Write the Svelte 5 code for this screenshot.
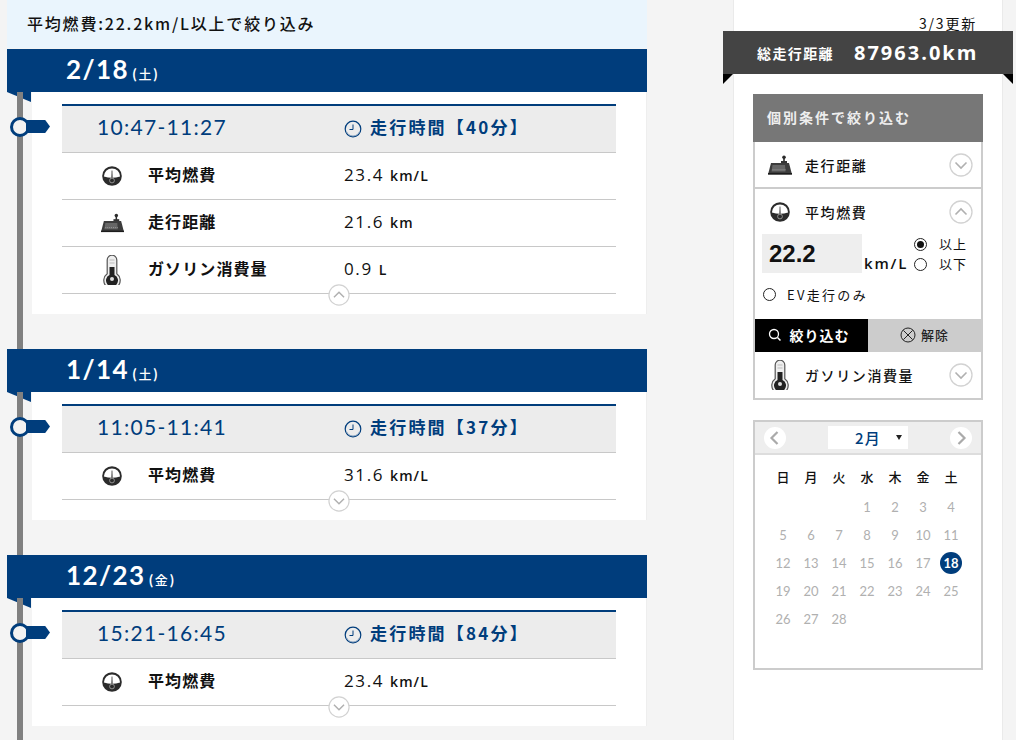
<script>
	const days = [
		{
			date: '2/18',
			wd: '土',
			time: '10:47-11:27',
			mins: 40,
			open: true,
			rows: [
				{ icon: 'gauge', label: '平均燃費', value: '23.4', unit: 'km/L' },
				{ icon: 'tray', label: '走行距離', value: '21.6', unit: 'km' },
				{ icon: 'thermo', label: 'ガソリン消費量', value: '0.9', unit: 'L' }
			]
		},
		{
			date: '1/14',
			wd: '土',
			time: '11:05-11:41',
			mins: 37,
			open: false,
			rows: [{ icon: 'gauge', label: '平均燃費', value: '31.6', unit: 'km/L' }]
		},
		{
			date: '12/23',
			wd: '金',
			time: '15:21-16:45',
			mins: 84,
			open: false,
			rows: [{ icon: 'gauge', label: '平均燃費', value: '23.4', unit: 'km/L' }]
		}
	];

	const weekdays = ['日', '月', '火', '水', '木', '金', '土'];
	// Feb starts on a Wednesday
	const cells = [...Array(3).fill(null), ...Array.from({ length: 28 }, (_, i) => i + 1)];
</script>

{#snippet icon(name, w, h)}
	{#if name === 'gauge'}
		<svg width={w} height={h} viewBox="0 0 20 20">
			<circle cx="10" cy="10" r="9.800" fill="#2b2b2b" />
			<path d="M1.900 10.500a8.100 8.100 0 0 1 16.200 0Q10 13 1.900 10.500z" fill="#fff" />
			<path d="M9.600 4.500h.8l.4 8h-1.600z" fill="#555" />
			<circle cx="10" cy="14.500" r="2.400" fill="#2b2b2b" stroke="#aaa" stroke-width=".8" />
		</svg>
	{:else if name === 'tray'}
		<svg width={w} height={h} viewBox="0 0 24 20">
			<path d="M15.200 2h1.600v6h-1.600z" fill="#2b2b2b" />
			<circle cx="16" cy="2.200" r="1.800" fill="#2b2b2b" />
			<path d="M13 6h6v2h-6z" fill="#333" />
			<path d="M3 8H21l3 11.500H0z" fill="#3c3c3c" />
			<path d="M4.500 10h12.500l.5 6.500H3.500z" fill="#666" />
			<path d="M4.500 14.800h13" stroke="#aaa" stroke-width=".8" stroke-dasharray="1 1" />
			<path d="M0 18h24v1.500H0z" fill="#1c1c1c" />
		</svg>
	{:else if name === 'thermo'}
		<svg width={w} height={h} viewBox="0 0 18 30">
			<path d="M4.200 18.800V5a4.800 4.800 0 0 1 9.600 0v13.800a8.200 8.200 0 1 1-9.600 0z" fill="#eee" stroke="#555" stroke-width="1.200" />
			<path d="M6.500 12h5v8a6 6 0 1 1-5 0z" fill="#222" />
			<circle cx="9" cy="24" r="2" fill="#ddd" />
			<path d="M6.500 5h5M6.500 8h5" stroke="#bbb" stroke-width="1" />
		</svg>
	{/if}
{/snippet}

{#snippet chevron(up, size)}
	<svg class="chev" width={size} height={size} viewBox="0 0 24 24">
		<circle cx="12" cy="12" r="11" fill="#fff" stroke="#d2d2d2" stroke-width="1.300" />
		<path d={up ? 'M6.500 14.500 12 9l5.500 5.500' : 'M6.500 9.500 12 15l5.500-5.500'} fill="none" stroke="#b0b0b0" stroke-width="1.600" />
	</svg>
{/snippet}

<div class="page">
	<main class="timeline">
		<div class="notice">平均燃費:22.2km/L以上で絞り込み</div>
		{#each days as day}
			<section class="day">
				<h2 class="date">{day.date}<small>(<span>{day.wd}</span>)</small></h2>
				<div class="card">
					<span class="pin"></span>
					<div class="time-row">
						<span class="time">{day.time}</span>
						<span class="duration">
							<svg width="18" height="18" viewBox="0 0 18 18">
								<circle cx="9" cy="9" r="7.800" fill="none" stroke="#003d7c" stroke-width="1.200" />
								<path d="M9 4.500V9.500H5.500" fill="none" stroke="#003d7c" stroke-width="1" />
								<path d="M2.500 11.500a7 7 0 0 0 13 0" fill="none" stroke="#8fa8c4" stroke-width="1" />
							</svg>
							<span class="duration-text">走行時間【{day.mins}分】</span>
						</span>
					</div>
					{#each day.rows as row}
						<div class="row">
							<span class="row-icon">
								{@render icon(row.icon, row.icon === 'tray' ? 23 : row.icon === 'thermo' ? 18 : 20, row.icon === 'thermo' ? 30 : 20)}
							</span>
							<span class="row-label">{row.label}</span>
							<span class="row-value">{row.value}<small>{row.unit}</small></span>
						</div>
					{/each}
					<div class="toggle">{@render chevron(day.open, 22)}</div>
				</div>
			</section>
		{/each}
	</main>

	<aside class="side">
		<p class="updated">3/3更新</p>
		<div class="total">
			<span class="total-label">総走行距離</span>
			<span class="total-value">87963.0km</span>
		</div>

		<div class="filter">
			<h3>個別条件で絞り込む</h3>
			<div class="acc">
				<div class="acc-head">
					<span class="acc-icon">{@render icon('tray', 24, 20)}</span>
					<span class="acc-label">走行距離</span>
					{@render chevron(false, 24)}
				</div>
				<div class="acc-open">
					<div class="acc-head">
						<span class="acc-icon">{@render icon('gauge', 20, 20)}</span>
						<span class="acc-label">平均燃費</span>
						{@render chevron(true, 24)}
					</div>
					<div class="fuel">
						<div class="fuel-input">22.2</div>
						<span class="fuel-unit">km/L</span>
						<div class="fuel-radios">
							<label><i class="radio on"></i>以上</label>
							<label><i class="radio"></i>以下</label>
						</div>
					</div>
					<label class="ev"><i class="radio"></i>EV走行のみ</label>
					<div class="actions">
						<button class="apply">
							<svg width="14" height="14" viewBox="0 0 14 14">
								<circle cx="6" cy="6" r="4.500" fill="none" stroke="#fff" stroke-width="1.300" />
								<path d="M9.500 9.500l3 3" stroke="#fff" stroke-width="1.500" />
							</svg>
							絞り込む
						</button>
						<button class="clear">
							<svg width="16" height="16" viewBox="0 0 16 16">
								<circle cx="8" cy="8" r="7" fill="none" stroke="#222" stroke-width="1" />
								<path d="M3.500 3.500l9 9m0-9l-9 9" stroke="#222" stroke-width="1" />
							</svg>
							解除
						</button>
					</div>
				</div>
				<div class="acc-head last">
					<span class="acc-icon">{@render icon('thermo', 18, 30)}</span>
					<span class="acc-label">ガソリン消費量</span>
					{@render chevron(false, 24)}
				</div>
			</div>
		</div>

		<div class="calendar">
			<div class="cal-head">
				<span class="nav">
					<svg width="22" height="22" viewBox="0 0 22 22"><path d="M13.500 5 7.500 11l6 6" fill="none" stroke="#aaa" stroke-width="2.200" /></svg>
				</span>
				<div class="month">2月<i></i></div>
				<span class="nav">
					<svg width="22" height="22" viewBox="0 0 22 22"><path d="M8.500 5l6 6-6 6" fill="none" stroke="#aaa" stroke-width="2.200" /></svg>
				</span>
			</div>
			<div class="cal-grid">
				{#each weekdays as w}
					<span class="wd">{w}</span>
				{/each}
				{#each cells as d}
					<span class="cell" class:active={d === 18}>{d ?? ''}</span>
				{/each}
			</div>
		</div>
	</aside>
</div>

<style>
	:global(body) {
		background: #f4f4f4;
		overflow: hidden;
	}

	.page {
		display: flex;
		align-items: flex-start;
		height: 740px;
		overflow: hidden;
		font-family: "Noto Sans CJK JP", "Noto Sans", sans-serif;
		color: #111;
	}

	.timeline {
		position: relative;
		width: 640px;
		margin-left: 7px;
		flex: none;
	}

	.notice {
		height: 48px;
		padding-left: 20px;
		background: #eaf5fd;
		font-size: 16px;
		font-weight: 500;
		line-height: 47px;
		letter-spacing: 1.8px;
	}

	.day {
		margin-bottom: 35px;
	}

	.notice + .day {
		margin-top: 1px;
	}

	.date {
		position: relative;
		z-index: 2;
		height: 43px;
		margin: 0;
		padding-left: 59px;
		background: #003d7c;
		color: #fff;
		font-family: Lato, sans-serif;
		font-size: 26px;
		font-weight: 700;
		line-height: 41px;
		letter-spacing: 1.4px;
	}

	.date small {
		margin-left: 3px;
		font-family: "Noto Sans CJK JP", sans-serif;
		font-size: 13px;
		font-weight: 700;
		line-height: 1;
		letter-spacing: 1.5px;
	}

	.date small span {
		font-weight: 500;
	}

	.card {
		position: relative;
		margin-left: 25px;
		padding: 12px 30px 20px;
		background: #fff;
		border-right: 1px solid #eee;
	}

	/* fold under the date band */
	.card::before {
		content: '';
		position: absolute;
		left: -25px;
		top: 0;
		width: 24px;
		height: 10px;
		background: #003d7c;
		clip-path: polygon(0 0, 100% 0, 100% 100%);
	}

	/* gray timeline bar on the left of the card */
	.card::after {
		content: '';
		position: absolute;
		left: -15px;
		top: 0;
		bottom: -35px;
		width: 6px;
		background: #808080;
	}

	.day:last-child .card::after {
		bottom: -60px;
	}

	.pin {
		position: absolute;
		left: -22px;
		top: 25px;
		width: 20px;
		height: 20px;
		box-sizing: border-box;
		border: 3.5px solid #003d7c;
		border-radius: 50%;
		background: #f2f2f2;
		z-index: 1;
	}

	.pin::after {
		content: '';
		position: absolute;
		left: 13px;
		top: 0;
		width: 24px;
		height: 13px;
		background: #003d7c;
		clip-path: polygon(0 0, 80% 0, 100% 50%, 80% 100%, 0 100%);
	}

	.time-row {
		display: flex;
		align-items: center;
		height: 46px;
		padding-left: 35px;
		background: #ececec;
		border-top: 2px solid #003d7c;
		border-bottom: 1px solid #c8c8c8;
		color: #003d7c;
	}

	.time {
		width: 247px;
		padding-bottom: 5px;
		font-family: Lato, sans-serif;
		font-size: 21px;
		letter-spacing: 1.3px;
	}

	.duration {
		display: flex;
		align-items: center;
		gap: 8px;
	}

	.duration-text {
		padding-bottom: 5px;
		font-size: 17px;
		font-weight: 700;
		letter-spacing: 2.2px;
	}

	.row {
		display: flex;
		align-items: center;
		height: 46px;
		border-bottom: 1px solid #c8c8c8;
	}

	.row-icon {
		display: flex;
		justify-content: center;
		width: 100px;
	}

	.row-label {
		width: 196px;
		margin-left: -14px;
		padding-bottom: 4px;
		font-size: 16px;
		font-weight: 700;
		letter-spacing: 1.1px;
	}

	.row-value {
		padding-bottom: 4px;
		font-family: "Open Sans", sans-serif;
		font-size: 17px;
		letter-spacing: 1.6px;
	}

	.row-value small {
		margin-left: 6px;
		font-size: 14px;
		font-weight: 600;
		letter-spacing: 1.1px;
	}

	.toggle {
		position: absolute;
		left: 296px;
		bottom: 8px;
		display: flex;
	}

	.side {
		position: relative;
		width: 270px;
		height: 740px;
		margin-left: 86px;
		flex: none;
		box-sizing: border-box;
		padding: 0 19px;
		background: #fff;
		border-left: 1px solid #eaeaea;
		border-right: 1px solid #eaeaea;
	}

	.updated {
		margin: 0;
		height: 31px;
		padding-right: 6px;
		text-align: right;
		font-size: 14px;
		line-height: 46px;
		letter-spacing: 1.8px;
	}

	.total {
		position: relative;
		display: flex;
		align-items: center;
		height: 43px;
		margin: 0 -30px 20px;
		padding-left: 34px;
		background: #444;
		color: #fff;
	}

	.total::before,
	.total::after {
		content: '';
		position: absolute;
		top: 43px;
		border-top: 10px solid #000;
	}

	.total::before {
		left: 0;
		border-left: 10px solid transparent;
		transform: scaleX(-1);
	}

	.total::after {
		right: 0;
		border-left: 10px solid transparent;
	}

	.total-label {
		width: 97px;
		font-size: 14px;
		font-weight: 700;
		letter-spacing: 1.4px;
	}

	.total-value {
		font-family: "Open Sans", sans-serif;
		font-size: 20px;
		font-weight: 700;
		letter-spacing: 2px;
	}

	.filter h3 {
		height: 48px;
		margin: 0;
		padding-left: 14px;
		background: #777;
		color: #eee;
		font-size: 14px;
		font-weight: 700;
		line-height: 46px;
		letter-spacing: 2px;
	}

	.acc {
		border: 2px solid #ccc;
		border-top: 0;
	}

	.acc-head {
		display: flex;
		align-items: center;
		height: 45px;
		padding: 0 8px 0 13px;
		border-bottom: 2px solid #ccc;
	}

	.acc-head.last {
		border-bottom: 0;
		height: 46px;
	}

	.acc-open .acc-head {
		border-bottom: 0;
	}

	.acc-icon {
		display: flex;
		justify-content: center;
		width: 24px;
		margin-right: 13px;
	}

	.acc-label {
		flex: 1;
		font-size: 14px;
		font-weight: 500;
		letter-spacing: 1.6px;
	}

	.fuel {
		display: flex;
		align-items: flex-end;
		padding-left: 7px;
	}

	.fuel-input {
		width: 93px;
		height: 39px;
		padding-left: 7px;
		background: #eee;
		font-family: "Liberation Sans", sans-serif;
		font-size: 24px;
		font-weight: 700;
		line-height: 40px;
	}

	.fuel-unit {
		margin-left: 2px;
		font-family: "Open Sans", sans-serif;
		font-size: 15px;
		font-weight: 600;
		line-height: 20px;
		letter-spacing: 1.8px;
		white-space: nowrap;
	}

	.fuel-radios {
		display: flex;
		flex-direction: column;
		gap: 2px;
		margin-left: 6px;
		font-size: 13px;
		line-height: 18px;
		letter-spacing: 1px;
	}

	.fuel-radios label {
		display: flex;
		align-items: center;
	}

	.radio {
		position: relative;
		flex: none;
		box-sizing: border-box;
		width: 13px;
		height: 13px;
		margin-right: 12px;
		border: 1px solid #222;
		border-radius: 50%;
		background: #fff;
	}

	.radio.on::after {
		content: '';
		position: absolute;
		inset: 2px;
		border-radius: 50%;
		background: #111;
	}

	.ev {
		display: flex;
		align-items: center;
		height: 42px;
		padding: 0 0 4px 8px;
		font-size: 13px;
		letter-spacing: 2.3px;
	}

	.ev .radio {
		margin-right: 11px;
	}

	.actions {
		display: flex;
		height: 33px;
	}

	.actions button {
		display: flex;
		align-items: center;
		justify-content: center;
		gap: 5px;
		width: 50%;
		padding: 0 0 2px;
		border: 0;
		font-family: inherit;
		font-size: 13px;
		font-weight: 700;
		letter-spacing: 1px;
	}

	.actions .apply {
		gap: 8px;
		padding-right: 6px;
		background: #000;
		color: #fff;
		font-size: 14px;
	}

	.actions .clear {
		background: #ccc;
		color: #222;
		font-weight: 500;
	}

	.calendar {
		height: 250px;
		margin-top: 20px;
		box-sizing: border-box;
		border: 2px solid #ccc;
	}

	.cal-head {
		display: flex;
		align-items: center;
		justify-content: space-between;
		height: 31px;
		padding: 0 9px;
		background: #eee;
		border-bottom: 2px solid #ddd;
	}

	.nav {
		display: flex;
		width: 22px;
		height: 22px;
		border-radius: 50%;
		background: #fff;
	}

	.month {
		position: relative;
		width: 80px;
		height: 23px;
		background: #fff;
		color: #003d7c;
		font-size: 15px;
		font-weight: 500;
		line-height: 23px;
		text-align: center;
		letter-spacing: 1.2px;
	}

	.month i {
		position: absolute;
		right: 6px;
		top: 9px;
		border-top: 5px solid #222;
		border-left: 3px solid transparent;
		border-right: 3px solid transparent;
	}

	.cal-grid {
		display: grid;
		grid-template-columns: repeat(7, 28px);
		grid-auto-rows: 28px;
		align-items: center;
		justify-items: center;
		padding: 10px 0 0 14px;
	}

	.wd {
		padding-bottom: 6px;
		font-size: 13px;
		font-weight: 500;
	}

	.cell {
		display: flex;
		align-items: center;
		justify-content: center;
		width: 22px;
		height: 22px;
		border-radius: 50%;
		color: #b0b0b0;
		font-family: Lato, sans-serif;
		font-size: 13px;
	}

	.cell.active {
		background: #003d7c;
		color: #fff;
		font-weight: 700;
	}
</style>
